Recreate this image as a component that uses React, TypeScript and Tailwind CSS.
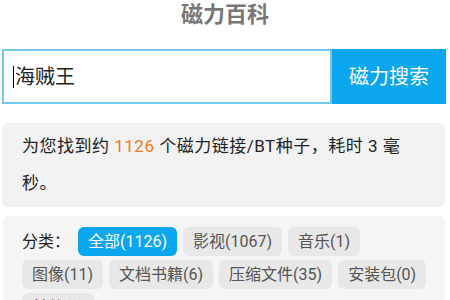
const cats = [
  { label: '全部(1126)', active: true },
  { label: '影视(1067)' },
  { label: '音乐(1)' },
  { label: '图像(11)' },
  { label: '文档书籍(6)' },
  { label: '压缩文件(35)' },
  { label: '安装包(0)' },
  { label: '其他(1)' },
];

export default function App() {
  return (
    <div
      className="w-[450px] h-[300px] overflow-hidden bg-white"
      style={{ fontFamily: 'Roboto, "Noto Sans CJK SC", sans-serif' }}
    >
      {/* Header */}
      <h1 className="h-[30px] text-center text-[22px] leading-[30px] font-bold text-[#777]">磁力百科</h1>

      {/* Search */}
      <div className="mt-[19px] ml-[2px] mr-[4px] flex h-[55px]">
        <div className="flex flex-1 items-center border-2 border-[#74c6ea] pl-[9px] text-[20px] text-[#222]">
          <span className="mr-px inline-block h-[22px] w-px bg-black" />
          海贼王
        </div>
        <button className="w-[114px] bg-[#0aa6ee] text-[20px] text-white">磁力搜索</button>
      </div>

      {/* Result summary */}
      <div className="mt-[19px] ml-[2px] mr-[5px] rounded-md bg-[#f2f2f2] py-[5px] pl-[20px] pr-[20px] text-[17px] leading-[37px] tracking-[0.5px] text-[#222]">
        为您找到约 <span className="text-[#f07a1a]">1126</span> 个磁力链接/BT种子，耗时 3 毫<br />秒。
      </div>

      {/* Categories */}
      <div className="mt-[9px] ml-[3px] mr-[5px] rounded-md bg-[#f5f5f5] pt-[11px] pb-3 pl-[19px] pr-[6px]">
        <div className="flex flex-wrap items-center gap-x-[6px] gap-y-[4px] text-[16px]">
          <span className="mr-[2px] text-[#222]">分类：</span>
          {cats.map((c) => (
            <span
              key={c.label}
              className={`h-[29px] rounded-md px-[10px] leading-[29px] ${
                c.active ? 'bg-[#0aa6ee] text-white' : 'bg-[#e8e8e8] text-[#555]'
              }`}
            >
              {c.label}
            </span>
          ))}
        </div>
      </div>
    </div>
  );
}
